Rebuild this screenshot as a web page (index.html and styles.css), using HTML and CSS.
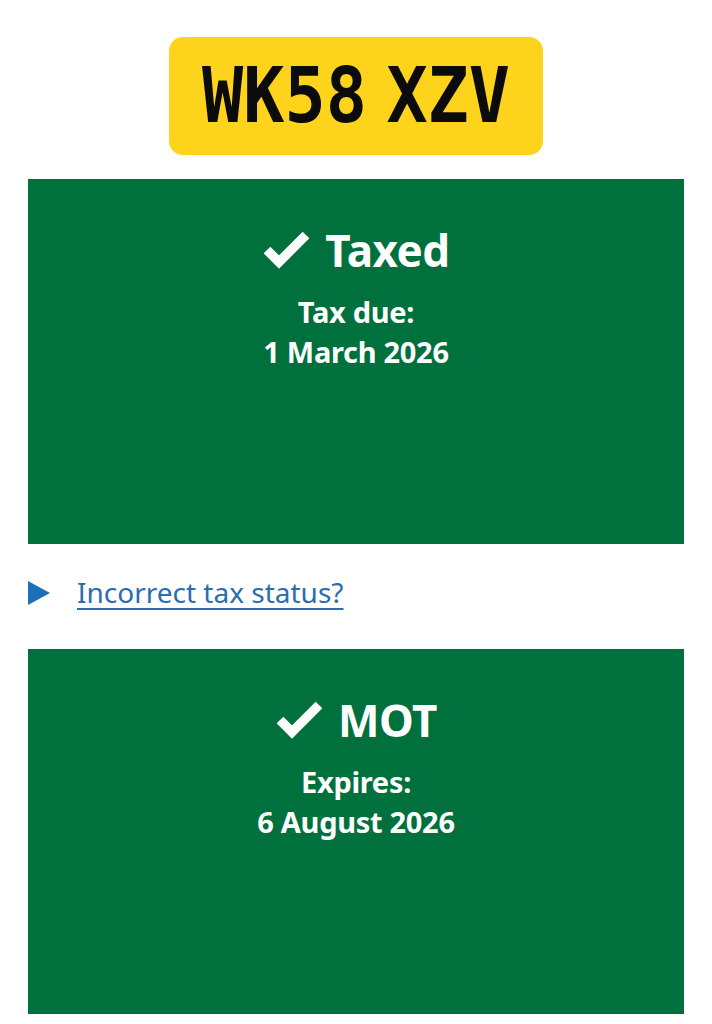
FILE: index.html
```html
<!DOCTYPE html>
<html lang="en">
<head>
<meta charset="utf-8">
<title>Vehicle details</title>
<link rel="stylesheet" href="styles.css">
</head>
<body>
<main class="page">
  <div class="plate-wrap">
    <div class="plate"><span class="plate-text">WK58 XZV</span></div>
  </div>

  <section class="status">
    <h2 class="status-title">
      <svg class="tick" viewBox="0 0 49 40" aria-hidden="true"><polyline points="5,20 17,32 44,5" fill="none" stroke="#fff" stroke-width="9.5" stroke-linecap="butt" stroke-linejoin="miter"/></svg>
      <span>Taxed</span>
    </h2>
    <p class="status-text">Tax due:<br>1 March 2026</p>
  </section>

  <div class="details">
    <span class="arrow"></span>
    <a class="details-link" href="#">Incorrect tax status?</a>
  </div>

  <section class="status">
    <h2 class="status-title">
      <svg class="tick" viewBox="0 0 49 40" aria-hidden="true"><polyline points="5,20 17,32 44,5" fill="none" stroke="#fff" stroke-width="9.5" stroke-linecap="butt" stroke-linejoin="miter"/></svg>
      <span>MOT</span>
    </h2>
    <p class="status-text">Expires:<br>6 August 2026</p>
  </section>
</main>
</body>
</html>
```

FILE: styles.css
```css
html, body {
  margin: 0;
  padding: 0;
  background: #ffffff;
}

body {
  font-family: "Noto Sans", "Liberation Sans", sans-serif;
  color: #0b0c0c;
}

.page {
  padding: 37px 28px 0;
}

.plate-wrap {
  display: flex;
  justify-content: center;
}

.plate {
  width: 374px;
  height: 118px;
  background: #fed31c;
  border-radius: 14px;
  display: flex;
  align-items: center;
  justify-content: center;
}

.plate-text {
  display: inline-block;
  font-family: "DejaVu Sans Mono", monospace;
  font-weight: bold;
  font-size: 76px;
  line-height: 1;
  color: #0b0b0b;
  white-space: nowrap;
  word-spacing: -24px;
  transform: scaleX(0.9);
}

.status {
  margin-top: 24px;
  height: 365px;
  box-sizing: border-box;
  background: #00703c;
  color: #ffffff;
  text-align: center;
  padding-top: 46px;
}

.details + .status {
  margin-top: 0;
}

.status-title {
  margin: 0;
  display: flex;
  justify-content: center;
  align-items: center;
  gap: 14px;
  font-size: 44px;
  line-height: 50px;
  font-weight: 700;
  letter-spacing: -0.5px;
}

.tick {
  width: 49px;
  height: 40px;
  flex: none;
}

.status-text {
  margin: 17px 0 0;
  font-size: 29px;
  line-height: 40px;
  font-weight: 700;
  letter-spacing: -0.3px;
}

.details {
  display: flex;
  align-items: center;
  gap: 27px;
  height: 41px;
  margin: 28px 0 36px;
}

.arrow {
  width: 0;
  height: 0;
  border-top: 12px solid transparent;
  border-bottom: 12px solid transparent;
  border-left: 22px solid #1d70b8;
}

.details-link {
  font-size: 28px;
  line-height: 41px;
  color: #2a6db0;
  text-decoration: underline;
  text-decoration-thickness: 2px;
  text-underline-offset: 5px;
}
```
